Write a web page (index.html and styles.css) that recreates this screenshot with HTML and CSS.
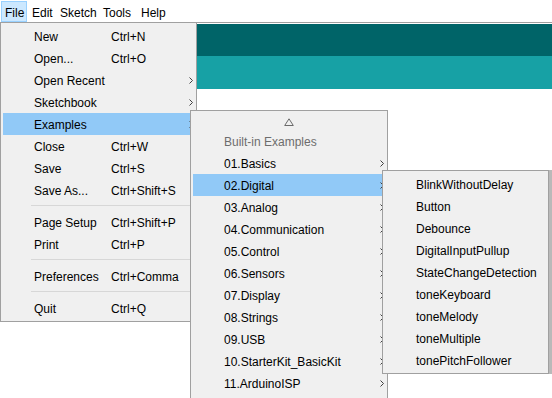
FILE: index.html
```html
<!DOCTYPE html>
<html>
<head>
<meta charset="utf-8">
<title>Arduino - File menu</title>
<link rel="stylesheet" href="styles.css">
</head>
<body>
<div class="window">
  <nav class="menubar">
    <span class="mb-item active w-file">File</span>
    <span class="mb-item w-edit">Edit</span>
    <span class="mb-item w-sketch">Sketch</span>
    <span class="mb-item w-tools">Tools</span>
    <span class="mb-item">Help</span>
  </nav>
  <div class="spacer"></div>
  <div class="toolbar"></div>
  <div class="tabs"></div>
  <div class="editor"></div>

  <div class="menu file-menu">
    <div class="item"><span class="label">New</span><span class="key">Ctrl+N</span></div>
    <div class="item"><span class="label">Open...</span><span class="key">Ctrl+O</span></div>
    <div class="item"><span class="label">Open Recent</span><span class="key"></span><svg class="arrow" width="4" height="7" viewBox="0 0 4 7"><polyline points="0.5,0.5 3.5,3.5 0.5,6.5" fill="none" stroke="#404040" stroke-width="1"/></svg></div>
    <div class="item"><span class="label">Sketchbook</span><span class="key"></span><svg class="arrow" width="4" height="7" viewBox="0 0 4 7"><polyline points="0.5,0.5 3.5,3.5 0.5,6.5" fill="none" stroke="#404040" stroke-width="1"/></svg></div>
    <div class="item hl"><span class="label">Examples</span><span class="key"></span><svg class="arrow" width="4" height="7" viewBox="0 0 4 7"><polyline points="0.5,0.5 3.5,3.5 0.5,6.5" fill="none" stroke="#404040" stroke-width="1"/></svg></div>
    <div class="item"><span class="label">Close</span><span class="key">Ctrl+W</span></div>
    <div class="item"><span class="label">Save</span><span class="key">Ctrl+S</span></div>
    <div class="item"><span class="label">Save As...</span><span class="key">Ctrl+Shift+S</span></div>
    <div class="sep"></div>
    <div class="item"><span class="label">Page Setup</span><span class="key">Ctrl+Shift+P</span></div>
    <div class="item"><span class="label">Print</span><span class="key">Ctrl+P</span></div>
    <div class="sep"></div>
    <div class="item"><span class="label">Preferences</span><span class="key">Ctrl+Comma</span></div>
    <div class="sep"></div>
    <div class="item"><span class="label">Quit</span><span class="key">Ctrl+Q</span></div>
  </div>

  <div class="menu examples-menu">
    <div class="scroll-up"><svg width="10" height="8" viewBox="0 0 10 8"><polygon points="5,0.8 9.3,7.5 0.7,7.5" fill="none" stroke="#6a6a6a" stroke-width="1"/></svg></div>
    <div class="item disabled"><span class="label wide">Built-in Examples</span></div>
    <div class="item"><span class="label wide">01.Basics</span><svg class="arrow" width="4" height="7" viewBox="0 0 4 7"><polyline points="0.5,0.5 3.5,3.5 0.5,6.5" fill="none" stroke="#404040" stroke-width="1"/></svg></div>
    <div class="item hl"><span class="label wide">02.Digital</span><svg class="arrow" width="4" height="7" viewBox="0 0 4 7"><polyline points="0.5,0.5 3.5,3.5 0.5,6.5" fill="none" stroke="#404040" stroke-width="1"/></svg></div>
    <div class="item"><span class="label wide">03.Analog</span><svg class="arrow" width="4" height="7" viewBox="0 0 4 7"><polyline points="0.5,0.5 3.5,3.5 0.5,6.5" fill="none" stroke="#404040" stroke-width="1"/></svg></div>
    <div class="item"><span class="label wide">04.Communication</span><svg class="arrow" width="4" height="7" viewBox="0 0 4 7"><polyline points="0.5,0.5 3.5,3.5 0.5,6.5" fill="none" stroke="#404040" stroke-width="1"/></svg></div>
    <div class="item"><span class="label wide">05.Control</span><svg class="arrow" width="4" height="7" viewBox="0 0 4 7"><polyline points="0.5,0.5 3.5,3.5 0.5,6.5" fill="none" stroke="#404040" stroke-width="1"/></svg></div>
    <div class="item"><span class="label wide">06.Sensors</span><svg class="arrow" width="4" height="7" viewBox="0 0 4 7"><polyline points="0.5,0.5 3.5,3.5 0.5,6.5" fill="none" stroke="#404040" stroke-width="1"/></svg></div>
    <div class="item"><span class="label wide">07.Display</span><svg class="arrow" width="4" height="7" viewBox="0 0 4 7"><polyline points="0.5,0.5 3.5,3.5 0.5,6.5" fill="none" stroke="#404040" stroke-width="1"/></svg></div>
    <div class="item"><span class="label wide">08.Strings</span><svg class="arrow" width="4" height="7" viewBox="0 0 4 7"><polyline points="0.5,0.5 3.5,3.5 0.5,6.5" fill="none" stroke="#404040" stroke-width="1"/></svg></div>
    <div class="item"><span class="label wide">09.USB</span><svg class="arrow" width="4" height="7" viewBox="0 0 4 7"><polyline points="0.5,0.5 3.5,3.5 0.5,6.5" fill="none" stroke="#404040" stroke-width="1"/></svg></div>
    <div class="item"><span class="label wide">10.StarterKit_BasicKit</span><svg class="arrow" width="4" height="7" viewBox="0 0 4 7"><polyline points="0.5,0.5 3.5,3.5 0.5,6.5" fill="none" stroke="#404040" stroke-width="1"/></svg></div>
    <div class="item"><span class="label wide">11.ArduinoISP</span><svg class="arrow" width="4" height="7" viewBox="0 0 4 7"><polyline points="0.5,0.5 3.5,3.5 0.5,6.5" fill="none" stroke="#404040" stroke-width="1"/></svg></div>
  </div>

  <div class="menu digital-menu">
    <div class="item"><span class="label wide">BlinkWithoutDelay</span></div>
    <div class="item"><span class="label wide">Button</span></div>
    <div class="item"><span class="label wide">Debounce</span></div>
    <div class="item"><span class="label wide">DigitalInputPullup</span></div>
    <div class="item"><span class="label wide">StateChangeDetection</span></div>
    <div class="item"><span class="label wide">toneKeyboard</span></div>
    <div class="item"><span class="label wide">toneMelody</span></div>
    <div class="item"><span class="label wide">toneMultiple</span></div>
    <div class="item"><span class="label wide">tonePitchFollower</span></div>
  </div>
</div>
</body>
</html>
```

FILE: styles.css
```css
html, body {
  margin: 0;
  padding: 0;
  background: #ffffff;
}

body {
  font-family: "Liberation Sans", Arial, sans-serif;
  font-size: 12px;
  color: #000000;
}

.window {
  position: relative;
  width: 552px;
  height: 398px;
  overflow: hidden;
  background: #ffffff;
}

/* ---------- menu bar ---------- */
.menubar {
  display: flex;
  height: 21px;
  padding: 1px 0 0 1px;
  border-bottom: 1px solid #a0a0a0;
  background: #ffffff;
}

.mb-item {
  box-sizing: border-box;
  height: 21px;
  border: 1px solid transparent;
  padding-left: 3px;
  line-height: 23px;
  white-space: nowrap;
  overflow: hidden;
}

.mb-item.active {
  background: #cce8ff;
  border-color: #99d1ff;
}

.w-file { width: 26px; margin-right: 1px; }
.w-edit { width: 28px; }
.w-sketch { width: 43px; }
.w-tools { width: 38px; }

/* ---------- editor chrome ---------- */
.spacer { height: 1px; }

.toolbar {
  height: 32px;
  background: #006468;
}

.tabs {
  height: 33px;
  background: #17a1a5;
}

.editor {
  height: 300px;
  background: #ffffff;
}

/* ---------- popup menus ---------- */
.menu {
  position: absolute;
  box-sizing: border-box;
  background: #f0f0f0;
  border: 1px solid #a0a0a0;
  padding: 2px;
}

.file-menu {
  left: 0;
  top: 22px;
  width: 197px;
}

.examples-menu {
  left: 190px;
  top: 110px;
  width: 198px;
  height: 300px;
}

.digital-menu {
  left: 382px;
  top: 170px;
  width: 167px;
  box-shadow: 3px 0 0 #b9b9b9;
}

.item {
  box-sizing: border-box;
  display: flex;
  align-items: center;
  height: 22px;
  padding: 2px 1px 0 31px;
  white-space: nowrap;
}

.item.hl {
  background: #91c9f7;
}

.item.disabled {
  color: #6d6d6d;
}

.label {
  width: 77px;
  flex: none;
}

.label.wide {
  width: auto;
  flex: 1;
}

.key {
  flex: 1;
}

.arrow {
  flex: none;
  display: block;
  margin-top: -2px;
}

.sep {
  height: 1px;
  margin: 4px 3px 5px 28px;
  background: #d7d7d7;
}

.scroll-up {
  display: flex;
  justify-content: center;
  align-items: center;
  height: 17px;
}

.scroll-up svg {
  display: block;
}
```
